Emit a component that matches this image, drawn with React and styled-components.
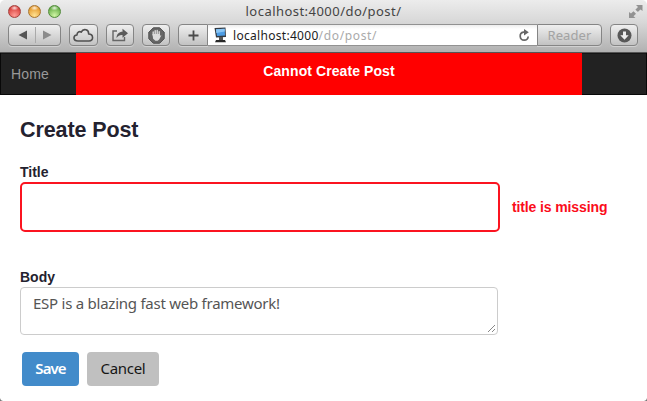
import React from "react";
import styled, { createGlobalStyle } from "styled-components";

const Global = createGlobalStyle`
  * { box-sizing: border-box; }
  body { margin: 0; background: #fff; overflow: hidden; }
`;

const Window = styled.div`
  width: 647px;
  height: 401px;
  display: flex;
  flex-direction: column;
  background: #fff;
  overflow: hidden;
  position: relative;
  font-family: "Liberation Sans", Arial, sans-serif;
  color: #24222f;
`;

const Chrome = styled.header`
  height: 53px;
  flex: none;
  background: linear-gradient(#ececec 0, #d8d8d8 22px, #b1b1b1 52px);
  border-bottom: 1px solid #555;
  border-radius: 5px 5px 0 0;
`;

const TitleBar = styled.div`
  height: 24px;
  display: grid;
  grid-template-columns: 80px 1fr 80px;
  align-items: center;
`;

const Lights = styled.div`
  display: flex;
  gap: 7px;
  padding: 0 0 2px 8px;
`;

const Light = styled.span`
  width: 13px;
  height: 13px;
  border-radius: 50%;
  border: 1px solid ${(p) => p.$rim};
  background:
    radial-gradient(ellipse 4px 2.5px at 50% 18%, rgba(255, 255, 255, 0.85), transparent),
    radial-gradient(circle at 50% 85%, ${(p) => p.$glow}, ${(p) => p.$tone} 75%);
`;

const WindowTitle = styled.div`
  text-align: center;
  font: 13px/22px "Noto Sans", sans-serif;
  padding-bottom: 2px;
  letter-spacing: 0.46px;
  color: #444;
  white-space: nowrap;
`;

const Expand = styled.div`
  display: flex;
  justify-content: flex-end;
  padding: 0 4px 2px 0;
`;

const Toolbar = styled.div`
  display: flex;
  height: 22px;
  padding: 0 9px 0 8px;
`;

const ToolButton = styled.div`
  width: ${(p) => p.$w}px;
  margin-right: ${(p) => p.$gap ?? 8}px;
  height: 22px;
  flex: none;
  display: flex;
  align-items: center;
  justify-content: center;
  border: 1px solid #858585;
  border-radius: ${(p) => p.$radius ?? "4px"};
  background: linear-gradient(#efefef, #c2c2c2);
  box-shadow: 0 1px 0 rgba(255, 255, 255, 0.35);
  font: 13px/20px "Noto Sans", sans-serif;
  letter-spacing: 0.1px;
  color: #a3a3a3;
`;

const Divider = styled.span`
  width: 1px;
  height: 16px;
  margin: 0 7px 0 8px;
  background: #aaa;
`;

const Address = styled.div`
  flex: 1;
  height: 22px;
  display: flex;
  align-items: center;
  padding: 0 7px 0 5px;
  border: solid #929292;
  border-width: 1px 0;
  background: linear-gradient(#eee, #fff 4px);
`;

const Url = styled.div`
  flex: 1;
  margin-left: 6px;
  padding-top: 1px;
  font: 12px/19px "Noto Sans", sans-serif;
  letter-spacing: 0.3px;
  color: #1c1c1c;
  white-space: nowrap;
`;

const UrlPath = styled.span`
  color: #aaa;
  letter-spacing: 0.65px;
`;

const Nav = styled.nav`
  height: 42px;
  flex: none;
  display: grid;
  grid-template-columns: 75px 506px 1fr;
  grid-template-rows: 42px;
  background: #222;
  border: solid #080808;
  border-width: 0 1px;
  box-shadow: inset 0 1px #151515, inset 0 -1px #080808;
`;

const NavLink = styled.a`
  padding-left: 10px;
  font-size: 14px;
  line-height: 42px;
  letter-spacing: 0.15px;
  color: #999;
`;

const Flash = styled.div`
  background: #f00;
  color: #fff;
  text-align: center;
  font-size: 14px;
  font-weight: bold;
  line-height: 37px;
  letter-spacing: 0.08px;
`;

const Form = styled.main`
  padding: 22px 20px 0;
`;

const Heading = styled.h1`
  margin: 0;
  font-size: 21.5px;
  line-height: 26px;
  font-weight: bold;
  letter-spacing: -0.1px;
`;

const Label = styled.label`
  display: block;
  font-size: 14px;
  line-height: 18px;
  font-weight: bold;
  margin-top: ${(p) => p.$top}px;
  padding-bottom: 1px;
`;

const Row = styled.div`
  display: flex;
  align-items: center;
  gap: 12px;
`;

const TitleInput = styled.div`
  width: 480px;
  height: 50px;
  border: 2px solid #fb1420;
  border-radius: 5px;
`;

const FieldError = styled.span`
  color: #fb0d1b;
  font-size: 14px;
  font-weight: bold;
  letter-spacing: -0.12px;
  white-space: nowrap;
`;

const BodyInput = styled.div`
  width: 478px;
  height: 48px;
  display: flex;
  justify-content: space-between;
  align-items: flex-end;
  padding: 0 1px 1px 12px;
  border: 1px solid #ccc;
  border-radius: 4px;
  font: 15px/20px "Noto Sans", sans-serif;
  color: #555;
`;

const BodyText = styled.span`
  align-self: flex-start;
  padding-top: 5px;
  letter-spacing: -0.25px;
`;

const Actions = styled.div`
  display: flex;
  gap: 8px;
  padding: 17px 0 0 2px;
`;

const Button = styled.div`
  width: ${(p) => p.$w}px;
  height: 34px;
  border-radius: 4px;
  background: ${(p) => (p.$primary ? "#428bca" : "#c0c0c0")};
  color: ${(p) => (p.$primary ? "#fff" : "#161616")};
  font: ${(p) => (p.$primary ? 600 : 400)} 15px/33px "Noto Sans", sans-serif;
  letter-spacing: ${(p) => (p.$primary ? -0.9 : -0.3)}px;
  text-align: center;
`;

const Corner = styled.i`
  position: absolute;
  bottom: 0;
  ${(p) => p.$side}: 0;
  width: 3px;
  height: 3px;
  background: radial-gradient(circle at top ${(p) => (p.$side === "left" ? "right" : "left")}, #fff 2.4px, #777 3.2px);
`;

const Icon = ({ w, h, children }) => (
  <svg width={w} height={h} viewBox={`0 0 ${w} ${h}`} fill="none" aria-hidden="true">
    {children}
  </svg>
);

export default function App() {
  return (
    <Window>
      <Global />
      <Chrome>
        <TitleBar>
          <Lights>
            <Light $rim="#a5423e" $tone="#d9403c" $glow="#ff9b95" />
            <Light $rim="#a87530" $tone="#e59a2d" $glow="#ffe191" />
            <Light $rim="#528b3b" $tone="#67ad47" $glow="#cff5a4" />
          </Lights>
          <WindowTitle>localhost:4000/do/post/</WindowTitle>
          <Expand>
            <Icon w={15} h={15}>
              <path d="M8 1h6.500v6l-2-1.500-2.700 2.500-2.500-2.300L10 3zM1 8l2 1.500 2.500-2.200L8 9.700l-2.500 2.500 2 1.800H1z" fill="#929292" />
              <path d="M4.500 4.500l7 6.500" stroke="#e2e2e2" strokeWidth="1.8" />
            </Icon>
          </Expand>
        </TitleBar>
        <Toolbar>
          <ToolButton $w={53}>
            <Icon w={9} h={10}><path d="M9 .5v9L.5 5z" fill="#555" /></Icon>
            <Divider />
            <Icon w={9} h={10}><path d="M0 .5v9L8.5 5z" fill="#8b8b8b" /></Icon>
          </ToolButton>
          <ToolButton $w={29}>
            <Icon w={21} h={15}>
              <path d="M5 13C-.2 13-.1 7.4 4 7c-.1-3 2.7-4 4.2-2.8C10.500-.2 16 1.700 15.600 6c5-.1 5.400 7 .4 7z" stroke="#505050" strokeWidth="1.6" strokeLinejoin="round" />
            </Icon>
          </ToolButton>
          <ToolButton $w={28}>
            <Icon w={18} h={14}>
              <path d="M6 3H2v9.500h11.500V9" stroke="#666" strokeWidth="1.4" />
              <path d="M5.500 10C5.600 6 8 3.700 11.500 3.700V.7L17 5.300l-5.500 4.500V7C9 6.800 7 7.700 5.500 10z" fill="#5a5a5a" />
            </Icon>
          </ToolButton>
          <ToolButton $w={28}>
            <Icon w={17} h={17}>
              <path d="M5.300.8h6.400l4.500 4.500v6.400l-4.500 4.500H5.300L.8 11.700V5.300z" fill="#666" stroke="#505050" />
              <path d="M5.200 8V5M7.200 7.500V3.600M9.200 7.500V3.500M11.200 8V4.700" stroke="#ddd" strokeWidth="1.4" strokeLinecap="round" />
              <path d="M4.500 7h7.400v1.800l1.500-.6-2.200 4.300-1.600 1.300H7.400l-2.300-2z" fill="#ddd" />
            </Icon>
          </ToolButton>
          <ToolButton $w={30} $gap={0} $radius="4px 0 0 4px">
            <Icon w={11} h={11}><path d="M5.500.5v10M.5 5.500h10" stroke="#4b4b4b" strokeWidth="1.8" /></Icon>
          </ToolButton>
          <Address>
            <Icon w={14} h={16}>
              <path d="M1.500 1l11-.5.5 9.500-10 .5z" fill="#343b43" />
              <path d="M3 2.200l8.700-.4.3 6.700-8 .4z" fill="#4d9de5" />
              <path d="M3 2.200l8.700-.4.1 2.700-8.500 1.600z" fill="#8bc6f5" />
              <path d="M6 10h4v3H6z" fill="#555" />
              <path d="M3 13h9l1 2.300H2z" fill="#292929" />
            </Icon>
            <Url>localhost:4000<UrlPath>/do/post/</UrlPath></Url>
            <Icon w={12} h={13}>
              <path d="M7 3.200H5.500a4 4 0 1 0 4.700 4.300" stroke="#666" strokeWidth="1.700" />
              <path d="M6 0l4.800 3.300L6 6.500z" fill="#666" />
            </Icon>
          </Address>
          <ToolButton $w={65} $radius="0 4px 4px 0">Reader</ToolButton>
          <ToolButton $w={28} $gap={0}>
            <Icon w={15} h={15}>
              <circle cx="7.500" cy="7.500" r="7" fill="#585858" />
              <path d="M6 3.500h3v3.700h2.700L7.500 11.700 3.300 7.200H6z" fill="#eee" />
            </Icon>
          </ToolButton>
        </Toolbar>
      </Chrome>
      <Nav>
        <NavLink>Home</NavLink>
        <Flash>Cannot Create Post</Flash>
      </Nav>
      <Form>
        <Heading>Create Post</Heading>
        <Label $top={20}>Title</Label>
        <Row>
          <TitleInput />
          <FieldError>title is missing</FieldError>
        </Row>
        <Label $top={36}>Body</Label>
        <BodyInput>
          <BodyText>ESP is a blazing fast web framework!</BodyText>
          <Icon w={9} h={9}><path d="M1 8L8 1M5 8l3-3" stroke="#888" /></Icon>
        </BodyInput>
        <Actions>
          <Button $w={57} $primary>Save</Button>
          <Button $w={72}>Cancel</Button>
        </Actions>
      </Form>
      <Corner $side="left" />
      <Corner $side="right" />
    </Window>
  );
}
